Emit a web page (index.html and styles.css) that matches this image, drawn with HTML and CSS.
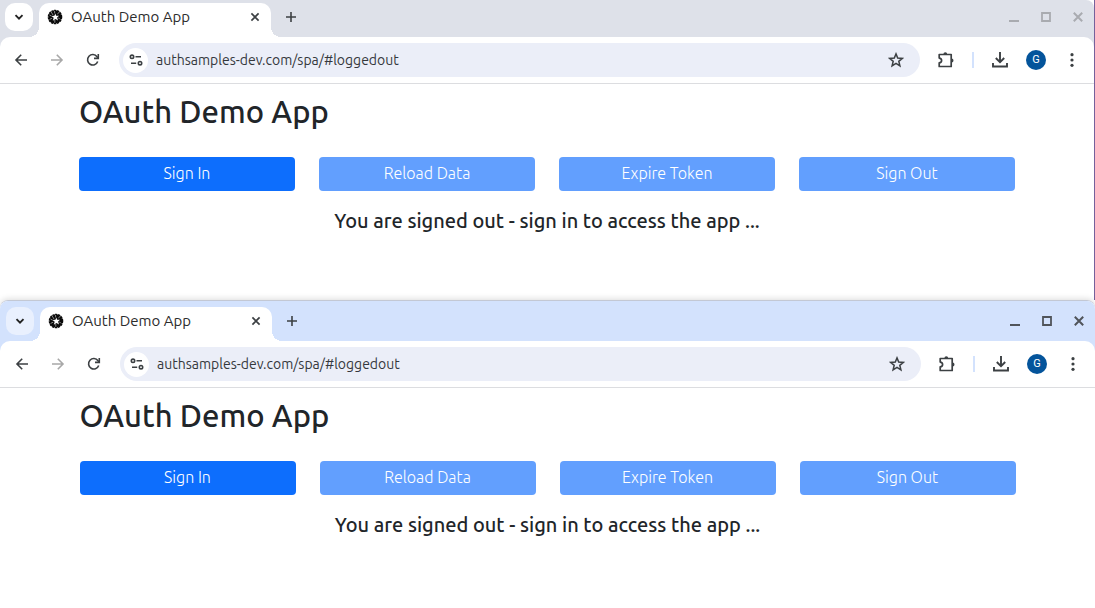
FILE: index.html
```html
<!DOCTYPE html>
<html lang="en">
<head>
<meta charset="utf-8">
<title>OAuth Demo App</title>
<link rel="stylesheet" href="styles.css">
</head>
<body>
<svg class="sprite" aria-hidden="true">
  <symbol id="chevron" viewBox="0 0 16 16"><path d="M4.5 6.2 8 9.7l3.5-3.5" fill="none" stroke="currentColor" stroke-width="1.9"/></symbol>
  <symbol id="favicon" viewBox="0 0 16 16"><circle cx="8" cy="8" r="6.4" fill="#0a0a0a"/><circle cx="8" cy="8" r="6.6" fill="none" stroke="#0a0a0a" stroke-width="1.4" stroke-dasharray="2.400 .6"/><path d="m8.300 4.400.9 2.300 2.900.1-2 1.800.9 3-2.500-1.500-2.700 1.700.9-3-2.200-1.900 2.900-.1z" fill="#fff"/><path d="M4.200 3l1.800 3M11.700 3.300l-1.200 2M3 10.200l2.200-1M12.800 9.800l-1.600-.8M7.600 2v2.400M7.800 11v2.800M2.600 6.200l2 .8" stroke="#bbb" stroke-width=".7"/></symbol>
  <symbol id="close" viewBox="0 0 16 16"><path d="m4.4 4.4 7.2 7.2m0-7.2-7.2 7.2" stroke="currentColor" stroke-width="1.7"/></symbol>
  <symbol id="plus" viewBox="0 0 16 16"><path d="M8 3v10M3 8h10" stroke="currentColor" stroke-width="1.6"/></symbol>
  <symbol id="minimize" viewBox="0 0 16 16"><path d="M3 12h10" stroke="currentColor" stroke-width="2"/></symbol>
  <symbol id="maximize" viewBox="0 0 16 16"><path d="M4 4h8v8H4z" fill="none" stroke="currentColor" stroke-width="1.8"/></symbol>
  <symbol id="quit" viewBox="0 0 16 16"><path d="m3.8 3.8 8.4 8.4m0-8.4-8.4 8.4" stroke="currentColor" stroke-width="2"/></symbol>
  <symbol id="back" viewBox="0 0 16 16"><path d="M14 8H3m5.2-5.2L3 8l5.2 5.2" fill="none" stroke="currentColor" stroke-width="1.6"/></symbol>
  <symbol id="forward" viewBox="0 0 16 16"><path d="M2 8h11M7.8 2.8 13 8l-5.2 5.2" fill="none" stroke="currentColor" stroke-width="1.6"/></symbol>
  <symbol id="reload" viewBox="0 0 16 16"><path d="M12.7 9.5A5.2 5.2 0 1 1 12 4.7l1.2 1.3" fill="none" stroke="currentColor" stroke-width="1.6"/><path d="M13.3 2v4.4H9" fill="none" stroke="currentColor" stroke-width="1.6"/></symbol>
  <symbol id="tune" viewBox="0 0 16 16"><g fill="none" stroke="currentColor" stroke-width="1.6"><circle cx="4" cy="4.8" r="1.7"/><path d="M7.5 4.8H13M3 11.2h5.2"/><circle cx="12" cy="11.2" r="1.7"/></g></symbol>
  <symbol id="star" viewBox="0 0 16 16"><path d="m8 1.9 1.7 4.1 4.6.4-3.5 2.9 1.1 4.5L8 11.4l-3.9 2.4 1.1-4.5-3.5-2.9 4.6-.4z" fill="none" stroke="currentColor" stroke-width="1.5"/></symbol>
  <symbol id="puzzle" viewBox="0 0 18 18"><path d="M2.2 3.5h12v12h-12v-3.6q2.4-.3 2.400-2.400T2.200 7.100z" fill="none" stroke="currentColor" stroke-width="1.700" stroke-linejoin="round"/><path d="M6.400 3.200a1.900 1.900 0 0 1 3.800 0zM14.600 7.600a1.900 1.900 0 0 1 0 3.800z" fill="currentColor"/></symbol>
  <symbol id="download" viewBox="0 0 18 18"><path d="M9 1v10M4.800 7 9 11.200 13.200 7M2 12v3.500h14V12" fill="none" stroke="currentColor" stroke-width="1.900"/></symbol>
  <symbol id="dots" viewBox="0 0 16 16"><g fill="currentColor"><circle cx="8" cy="2.700" r="1.600"/><circle cx="8" cy="8" r="1.600"/><circle cx="8" cy="13.300" r="1.600"/></g></symbol>
</svg>

<section class="window window-inactive">
  <header class="tab-strip">
    <button class="tab-search" aria-label="Search tabs"><svg><use href="#chevron"/></svg></button>
    <div class="tab">
      <svg><use href="#favicon"/></svg>
      <span class="tab-title">OAuth Demo App</span>
      <button class="icon-button" aria-label="Close tab"><svg><use href="#close"/></svg></button>
    </div>
    <button class="icon-button new-tab" aria-label="New tab"><svg><use href="#plus"/></svg></button>
    <div class="window-controls">
      <button class="icon-button" aria-label="Minimize"><svg><use href="#minimize"/></svg></button>
      <button class="icon-button" aria-label="Maximize"><svg><use href="#maximize"/></svg></button>
      <button class="icon-button" aria-label="Close window"><svg><use href="#quit"/></svg></button>
    </div>
  </header>
  <div class="toolbar-back">
    <nav class="toolbar" aria-label="Browser toolbar">
      <button class="icon-button" aria-label="Back"><svg><use href="#back"/></svg></button>
      <button class="icon-button" aria-label="Forward" disabled><svg><use href="#forward"/></svg></button>
      <button class="icon-button" aria-label="Reload"><svg><use href="#reload"/></svg></button>
      <div class="address-bar">
        <button class="icon-button site-info" aria-label="Site information"><svg><use href="#tune"/></svg></button>
        <input class="address" type="text" aria-label="Address" value="authsamples-dev.com/spa/#loggedout">
        <button class="icon-button" aria-label="Bookmark"><svg><use href="#star"/></svg></button>
      </div>
      <div class="actions">
        <button class="icon-button large" aria-label="Extensions"><svg><use href="#puzzle"/></svg></button>
        <span class="divider"></span>
        <button class="icon-button large" aria-label="Downloads"><svg><use href="#download"/></svg></button>
        <button class="avatar" aria-label="Profile G">G</button>
        <button class="icon-button" aria-label="Menu"><svg><use href="#dots"/></svg></button>
      </div>
    </nav>
  </div>
  <main class="page">
    <h1 class="page-title">OAuth Demo App</h1>
    <div class="buttons">
      <button class="primary">Sign In</button>
      <button class="primary" disabled>Reload Data</button>
      <button class="primary" disabled>Expire Token</button>
      <button class="primary" disabled>Sign Out</button>
    </div>
    <p class="message">You are signed out - sign in to access the app ...</p>
  </main>
</section>

<section class="window window-active">
  <header class="tab-strip">
    <button class="tab-search" aria-label="Search tabs"><svg><use href="#chevron"/></svg></button>
    <div class="tab">
      <svg><use href="#favicon"/></svg>
      <span class="tab-title">OAuth Demo App</span>
      <button class="icon-button" aria-label="Close tab"><svg><use href="#close"/></svg></button>
    </div>
    <button class="icon-button new-tab" aria-label="New tab"><svg><use href="#plus"/></svg></button>
    <div class="window-controls">
      <button class="icon-button" aria-label="Minimize"><svg><use href="#minimize"/></svg></button>
      <button class="icon-button" aria-label="Maximize"><svg><use href="#maximize"/></svg></button>
      <button class="icon-button" aria-label="Close window"><svg><use href="#quit"/></svg></button>
    </div>
  </header>
  <div class="toolbar-back">
    <nav class="toolbar" aria-label="Browser toolbar">
      <button class="icon-button" aria-label="Back"><svg><use href="#back"/></svg></button>
      <button class="icon-button" aria-label="Forward" disabled><svg><use href="#forward"/></svg></button>
      <button class="icon-button" aria-label="Reload"><svg><use href="#reload"/></svg></button>
      <div class="address-bar">
        <button class="icon-button site-info" aria-label="Site information"><svg><use href="#tune"/></svg></button>
        <input class="address" type="text" aria-label="Address" value="authsamples-dev.com/spa/#loggedout">
        <button class="icon-button" aria-label="Bookmark"><svg><use href="#star"/></svg></button>
      </div>
      <div class="actions">
        <button class="icon-button large" aria-label="Extensions"><svg><use href="#puzzle"/></svg></button>
        <span class="divider"></span>
        <button class="icon-button large" aria-label="Downloads"><svg><use href="#download"/></svg></button>
        <button class="avatar" aria-label="Profile G">G</button>
        <button class="icon-button" aria-label="Menu"><svg><use href="#dots"/></svg></button>
      </div>
    </nav>
  </div>
  <main class="page">
    <h1 class="page-title">OAuth Demo App</h1>
    <div class="buttons">
      <button class="primary">Sign In</button>
      <button class="primary" disabled>Reload Data</button>
      <button class="primary" disabled>Expire Token</button>
      <button class="primary" disabled>Sign Out</button>
    </div>
    <p class="message">You are signed out - sign in to access the app ...</p>
  </main>
</section>
</body>
</html>
```
FILE: styles.css
```css
* { box-sizing: border-box; }

body {
  margin: 0;
  background: #fff;
  color: #212529;
  font-family: Ubuntu, "Noto Sans", sans-serif;
}

button, input {
  margin: 0;
  padding: 0;
  border: 0;
  background: none;
  color: inherit;
  font: inherit;
}

svg { display: block; width: 16px; height: 16px; flex: none; }
.sprite { position: absolute; width: 0; height: 0; }

.window { --strip: #dee1e9; --controls: #a9abb0; --search: #fff; }
.window-inactive { border-right: 1px solid #75609b; }
.window-active {
  --strip: #d3e2fd;
  --controls: #50545a;
  --search: #e9f0fe;
  border-top: 1px solid #c3c8d4;
  border-radius: 8px 8px 0 0;
  box-shadow: 0 -1px 6px rgba(0, 0, 0, .14);
}

.tab-strip {
  display: flex;
  align-items: flex-start;
  padding: 3px 8px 0 5px;
  background: var(--strip);
}
.window-inactive .tab-strip { border-top-right-radius: 8px; }
.window-active .tab-strip { padding: 6px 8px 0 6px; border-radius: 8px 8px 0 0; }

.tab-search {
  display: grid;
  place-items: center;
  width: 28px;
  height: 28px;
  border-radius: 10px;
  background: var(--search);
  color: #222;
}

.tab {
  position: relative;
  display: flex;
  align-items: center;
  gap: 8px;
  width: 232px;
  height: 34px;
  margin-left: 6px;
  padding: 0 8px 6px;
  border-radius: 10px 10px 0 0;
  background: #fff;
  color: #2c2c2c;
}
.tab::before, .tab::after {
  content: "";
  position: absolute;
  bottom: 0;
  width: 10px;
  height: 10px;
}
.tab::before { right: 100%; background: radial-gradient(circle at 0 0, transparent 10px, #fff 10px); }
.tab::after { left: 100%; background: radial-gradient(circle at 100% 0, transparent 10px, #fff 10px); }
.tab-title { flex: 1; font-size: 15px; line-height: 20px; }

.icon-button { display: grid; place-items: center; color: #3c4043; }
.icon-button:disabled { color: #a8a8a8; }
.large svg { width: 18px; height: 18px; }
.new-tab { height: 28px; margin-left: 12px; }

.window-controls { display: flex; gap: 16px; height: 28px; margin-left: auto; }
.window-controls .icon-button { color: var(--controls); }

.toolbar-back { background: var(--strip); }
.toolbar {
  display: flex;
  align-items: center;
  gap: 20px;
  height: 47px;
  padding: 0 14px 0 13px;
  border-bottom: 1px solid #dcdde0;
  border-radius: 10px 10px 0 0;
  background: #fff;
}
.window-active .toolbar { padding: 0 14px; }

.address-bar {
  display: flex;
  flex: 1;
  align-items: center;
  gap: 8px;
  height: 34px;
  margin-left: -2px;
  padding: 0 16px 0 4px;
  border-radius: 17px;
  background: #ebeef8;
}
.site-info { width: 25px; height: 25px; border-radius: 50%; background: #fff; }
.address { flex: 1; min-width: 0; height: 24px; color: #35383c; font-size: 14px; outline: 0; }

.actions { display: flex; align-items: center; gap: 17px; margin-left: -3px; }
.divider { width: 2px; height: 16px; background: #d3e2fd; }
.avatar {
  width: 20px;
  height: 20px;
  margin-right: 1px;
  border-radius: 50%;
  background: #04549b;
  color: #fff;
  font-family: Roboto, sans-serif;
  font-size: 11px;
  line-height: 20px;
}

.page { max-width: 960px; min-height: 216px; margin: 0 auto; padding: 8px 12px 0; }
.page-title { margin: 0; font-size: 31px; font-weight: 500; line-height: 40px; }
.buttons { display: grid; grid-template-columns: repeat(4, 1fr); gap: 24px; margin-top: 25px; }
.primary {
  height: 34px;
  padding-bottom: 2px;
  border-radius: 4px;
  background: #0d6efd;
  color: #fff;
  font-size: 16px;
  font-weight: 300;
  line-height: 24px;
}
.primary:disabled { background: #629ffe; }
.message { margin: 16px 0 0; font-size: 20px; font-weight: 500; line-height: 28px; text-align: center; }
```
